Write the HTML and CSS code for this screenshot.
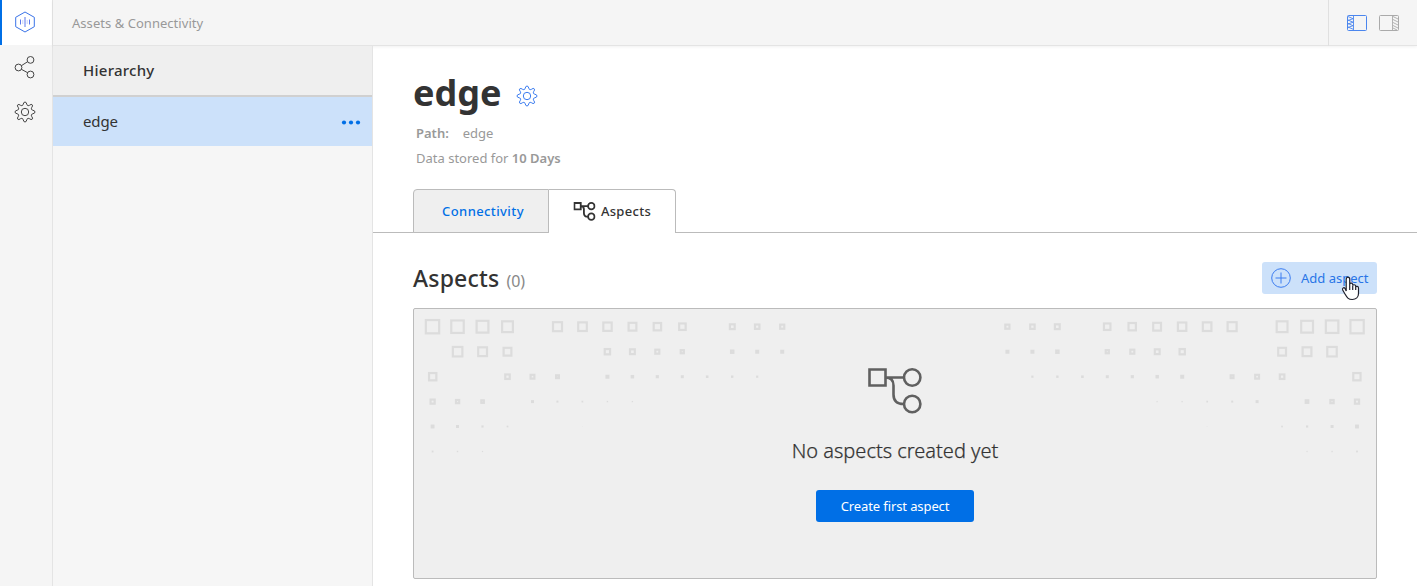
FILE: index.html
```html
<!DOCTYPE html>
<html lang="en">
<head>
<meta charset="utf-8">
<title>Assets &amp; Connectivity</title>
<link rel="stylesheet" href="styles.css">
</head>
<body>
<svg class="defs" width="0" height="0" aria-hidden="true">
  <symbol id="gear" viewBox="0 0 22 22">
    <path d="M9.200 3.300Q9.600 1 11 1t1.800 2.300q.2 1.100 1.200 1.300.9.200 1.700-.4 1.600-1.500 2.500-.4t-.4 2.500q-.6.800-.4 1.700.2 1 1.300 1.200Q21 9.600 21 11t-2.300 1.800q-1.100.2-1.300 1.200-.2.900.4 1.700 1.500 1.600.4 2.500t-2.500-.4q-.8-.6-1.700-.4-1 .2-1.200 1.300Q12.400 21 11 21t-1.800-2.300Q9 17.600 8 17.400q-.9-.2-1.700.4-1.600 1.500-2.500.4t.4-2.500q.6-.8.400-1.700-.2-1-1.300-1.200Q1 12.400 1 11t2.300-1.800Q4.400 9 4.600 8q.2-.9-.4-1.700-1.500-1.600-.4-2.500t2.500.4q.8.600 1.700.4 1-.2 1.200-1.300z"/>
    <circle cx="11" cy="11" r="3.700"/>
  </symbol>
  <symbol id="aspect" viewBox="0 0 56 48">
    <path d="M2.500 2.500h16v16h-16zM18.500 10.500h18M18.500 10.500c6 0 8 3 8 8v9c0 6 3 9.500 10 9.500"/>
    <circle cx="45.200" cy="10.500" r="8.200"/>
    <circle cx="45.200" cy="37" r="8.200"/>
  </symbol>
</svg>
<div class="app">
  <nav class="rail">
    <a class="rail-item active"><svg width="22" height="22" viewBox="0 0 22 22"><path d="M11 1l9.300 5.300v9.400L11 21l-9.300-5.300V6.300z"/><path class="bars" d="M6.500 8.500v5M11 6v10M15.500 8.500v5"/><path class="bars faint" d="M8.800 9v4M13.200 9v4"/></svg></a>
    <a class="rail-item"><svg width="22" height="24" viewBox="0 0 22 24"><circle cx="4.500" cy="12.500" r="3.400"/><circle cx="16.500" cy="4.900" r="3.400"/><circle cx="16.500" cy="19.500" r="3.400"/><path d="M7.400 10.700l6.200-4M7.400 14.300l6.200 3.400"/></svg></a>
    <a class="rail-item"><svg width="22" height="22"><use href="#gear"/></svg></a>
  </nav>
  <div class="body">
    <header class="topbar">
      <span class="crumb">Assets &amp; Connectivity</span>
      <div class="toggles">
        <svg class="blue" width="22" height="18" viewBox="0 0 22 18"><rect x="1.500" y="1.500" width="19" height="15" rx="1"/><path d="M7.500 1.500v15M2 2.500l5 2.200L2 6.500M2 6l5 2.200L2 10M2 9.500l5 2.200-5 1.800M2 13l5 2.200"/></svg>
        <svg width="22" height="18" viewBox="0 0 22 18"><rect x="1.500" y="1.500" width="19" height="15" rx="1"/><path d="M14.500 1.500v15M15 2.500l5 2.500M15 5.500l5 2.500M15 8.500l5 2.500M15 11.500l5 2.500M15 14l4 2"/></svg>
      </div>
    </header>
    <div class="columns">
      <aside class="tree">
        <h2 class="tree-title">Hierarchy</h2>
        <div class="tree-row"><span class="tree-name">edge</span><svg width="20" height="6" viewBox="0 0 20 6"><circle cx="3" cy="3.500" r="2.100"/><circle cx="10" cy="3.500" r="2.100"/><circle cx="17" cy="3.500" r="2.100"/></svg></div>
      </aside>
      <main class="main">
        <div class="heading"><h1 class="title">edge</h1><svg width="22" height="22"><use href="#gear"/></svg></div>
        <p class="meta path"><b>Path:</b><span>edge</span></p>
        <p class="meta stored">Data stored for <b>10 Days</b></p>
        <div class="tabs">
          <a class="tab connectivity">Connectivity</a>
          <a class="tab aspects"><svg width="23" height="19" viewBox="0 0 56 48"><use href="#aspect" width="56" height="48"/></svg><span>Aspects</span></a>
        </div>
        <section class="section">
          <div class="section-head">
            <h2 class="section-title">Aspects</h2><span class="count">(0)</span>
            <button class="add"><svg width="20" height="20" viewBox="0 0 20 20"><circle cx="10" cy="10" r="9.300"/><path d="M10 4.500v11M4.500 10h11"/></svg><span>Add aspect</span>
              <svg class="cursor" width="20" height="25" viewBox="0 0 20 25"><path d="M5.200 15V3.200c0-2.800 3.500-2.800 3.500 0v6.300-1.300c.4-1.500 2.800-1.300 3 .3v1.200c.4-1.400 2.700-1.200 3 .4v1c.5-1.200 2.800-.9 2.800 1v5.400c0 3.600-2.600 6-6.200 6-4.200 0-5.300-2-7.200-5.300L1.700 14c-.8-2 1.300-3 2.300-1.500zM8.700 9.500V14M11.700 10v4M14.700 11v3"/></svg>
            </button>
          </div>
          <div class="empty">
            <svg class="pattern" id="pattern" width="962" height="160" viewBox="414 309 962 160"></svg>
            <svg class="empty-icon" width="56" height="48"><use href="#aspect"/></svg>
            <p class="empty-text">No aspects created yet</p>
            <button class="create">Create first aspect</button>
          </div>
        </section>
      </main>
    </div>
  </div>
</div>
<script src="pattern.js"></script>
</body>
</html>
```
FILE: styles.css
```css
* { box-sizing: border-box; }
body { margin: 0; font-family: "Noto Sans", sans-serif; color: #333; background: #fff; overflow: hidden; }
h1, h2, p { margin: 0; }
button { border: 0; font: inherit; }
svg { display: block; flex: none; fill: none; }
.defs { position: absolute; }
.app { display: flex; height: 586px; }
.rail { width: 53px; flex: none; background: #f5f5f5; border-right: 1px solid #e4e4e4; }
.rail-item { display: flex; align-items: center; height: 45px; padding: 0 0 1px 14px; stroke: #444; }
.rail-item.active { background: #fff; border-left: 2px solid #006fe6; padding-left: 12px; stroke: #3a73e8; }
.bars { stroke: #5b78ec; }
.faint { opacity: .35; }
.body { flex: 1; display: flex; flex-direction: column; min-width: 0; }
.topbar { height: 46px; flex: none; display: flex; align-items: center; justify-content: space-between; background: #f5f5f5; border-bottom: 1px solid #e4e4e4; box-shadow: 0 1px 3px rgba(0, 0, 0, .06); }
.crumb { padding-left: 19px; font-size: 13px; color: #999; line-height: 18px; letter-spacing: .04px; }
.toggles { display: flex; align-items: center; gap: 10px; width: 89px; height: 46px; padding-left: 17px; border-left: 1px solid #e0e0e0; stroke: #aaa; }
.toggles .blue { stroke: #4b86ee; }
.toggles path { stroke-width: .9; }
.columns { flex: 1; display: flex; }
.tree { width: 320px; flex: none; background: #f6f6f6; border-right: 1px solid #e4e4e4; }
.tree-title { height: 51px; padding: 0 30px; background: #efefef; border-bottom: 2px solid #d0d0d0; font-size: 15px; line-height: 49px; font-weight: 500; letter-spacing: .25px; }
.tree-row { height: 49px; padding: 0 11px 0 30px; display: flex; align-items: center; justify-content: space-between; background: #cce1fa; font-size: 15px; }
.tree-name { padding-bottom: 2px; letter-spacing: -.1px; }
.tree-row svg { fill: #006fe6; }
.main { flex: 1; min-width: 0; }
.heading { display: flex; align-items: center; height: 75px; padding: 18px 0 0 40px; gap: 14px; stroke: #3b7cf0; }
.heading svg { margin-top: 6px; }
.title { font-size: 36px; line-height: 50px; font-weight: 700; }
.meta { padding-left: 43px; font-size: 13px; line-height: 25px; color: #999; }
.meta b { font-weight: 600; }
.path { display: flex; gap: 14px; }
.stored { height: 44px; }
.tabs { display: flex; height: 44px; padding-left: 40px; margin-top: -1px; border-bottom: 1px solid #bbb; font-size: 13px; font-weight: 500; }
.tab { display: flex; align-items: center; justify-content: center; height: 44px; border: 1px solid #bbb; }
.connectivity { width: 136px; padding-left: 4px; color: #006fe6; background: #efefef; border-radius: 4px 0 0 0; letter-spacing: .4px; }
.aspects { width: 127px; gap: 5px; padding-bottom: 1px; background: #fff; border-left: 0; border-bottom: 0; border-radius: 0 4px 0 0; stroke: #333; stroke-width: 4.600; letter-spacing: .3px; }
.aspects span, .title, .add span { stroke: none; }
.section { padding: 29px 40px 0; }
.section-head { display: flex; align-items: center; height: 32px; }
.section-title { font-size: 23px; font-weight: 500; line-height: 32px; letter-spacing: .2px; }
.count { margin: 6px 0 0 7px; font-size: 16px; color: #888; }
.add { position: relative; display: flex; align-items: center; gap: 10px; width: 115px; height: 32px; margin-left: auto; padding: 0 9px; border-radius: 3px; background: #cce1fa; color: #2875e7; font-size: 13px; white-space: nowrap; stroke: #3b7cf0; }
.cursor { position: absolute; left: 79px; top: 14px; fill: #fff; stroke: #20202c; stroke-width: 1.2; }
.empty { position: relative; height: 271px; margin-top: 14px; border: 1px solid #bbb; border-radius: 2px; background: #efefef; display: flex; flex-direction: column; align-items: center; }
.pattern { position: absolute; left: 0; top: 0; stroke: #dcdcdc; }
.empty-icon { margin-top: 58px; stroke: #606060; stroke-width: 2.600; }
.empty-text { margin-top: 21px; font-size: 20px; line-height: 30px; font-weight: 300; -webkit-text-stroke: .25px #333; }
.create { width: 158px; height: 32px; margin-top: 24px; padding: 0; border-radius: 3px; background: #006fe6; color: #fff; font-size: 13px; letter-spacing: -.1px; }
```
FILE: pattern.js
```js
// Each row: vertical centre, then [horizontal centre, size] of the left half.
const rows = [
  [326.7, [[432.5,15.5],[457.5,14.7],[482.5,14],[507.5,13],[557.5,11.2],[582.5,10.8],[607.5,10.6],[632.5,10],[657.4,9.6],[682.4,8.7],[732.3,7],[757.2,6.6],[782.2,6.3]]],
  [351.7, [[457.6,11.7],[482.6,11],[507.5,10],[607.4,7.5],[632.4,7],[657.3,6.2],[682.3,5.3],[732.2,4.5],[757.2,4],[782.2,4]]],
  [376.7, [[432.7,9.5],[507.5,6.7],[532.5,6],[557.5,5],[607.4,4],[632.4,3.5],[657.3,3.2],[682.3,3],[707.2,2.6],[732.2,2.4],[757.2,2.2]]],
  [401.6, [[432.6,6.3],[457.6,5.4],[482.6,4.7],[532.5,3],[557.4,2],[582.4,1.7],[607.4,1.4],[632.4,1.3]]],
  [426.5, [[432.6,3.9],[457.5,3],[482.5,2.2],[507.5,1.7],[582.4,0.9]]],
  [451.5, [[432.6,1.8],[457.5,1.4],[482.5,1.2]]]
];
const pattern = document.getElementById("pattern");
for (const [y, cells] of rows) {
  for (const [cx, size] of cells) {
    for (const x of [cx, 1789.6 - cx]) {
      const rect = document.createElementNS("http://www.w3.org/2000/svg", "rect");
      const stroke = Math.min(2.2, size / 2);
      const side = size - stroke;
      rect.setAttribute("x", x - side / 2);
      rect.setAttribute("y", y - side / 2);
      rect.setAttribute("width", side);
      rect.setAttribute("height", side);
      rect.setAttribute("stroke-width", stroke);
      pattern.appendChild(rect);
    }
  }
}
```
